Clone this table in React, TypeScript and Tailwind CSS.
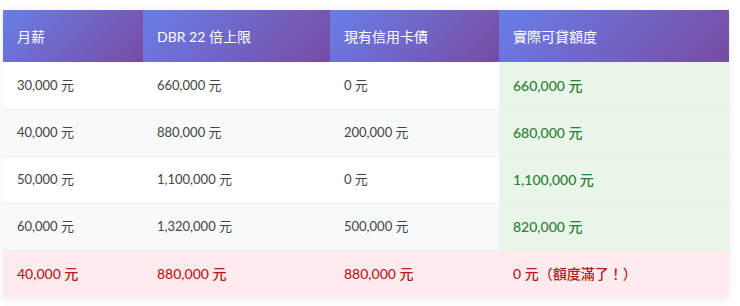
import React from 'react';

interface Row {
  salary: string;
  limit: string;
  debt: string;
  actual: string;
  warn?: boolean;
}

const rows: Row[] = [
  { salary: '30,000 元', limit: '660,000 元', debt: '0 元', actual: '660,000 元' },
  { salary: '40,000 元', limit: '880,000 元', debt: '200,000 元', actual: '680,000 元' },
  { salary: '50,000 元', limit: '1,100,000 元', debt: '0 元', actual: '1,100,000 元' },
  { salary: '60,000 元', limit: '1,320,000 元', debt: '500,000 元', actual: '820,000 元' },
  { salary: '40,000 元', limit: '880,000 元', debt: '880,000 元', actual: '0 元（額度滿了！）', warn: true },
];

const headers = ['月薪', 'DBR 22 倍上限', '現有信用卡債', '實際可貸額度'];
const widths = ['w-[140px]', 'w-[187px]', 'w-[169px]', 'w-[230px]'];

const App: React.FC = () => {
  return (
    <div className="w-[740px] h-[306px] bg-white pl-[3px] pt-[10px] font-['Lato','Noto_Sans_CJK_TC',sans-serif]">
      <table className="w-[726px] border-collapse table-fixed shadow-[0_2px_8px_rgba(0,0,0,0.08)]">
        <thead>
          <tr className="h-[52px]">
            {headers.map((h, i) => (
              <th
                key={h}
                className={`${widths[i]} px-[14px] text-left text-[14px] font-normal text-white bg-linear-135 from-[#667eea] to-[#764ba2]`}
              >
                {h}
              </th>
            ))}
          </tr>
        </thead>
        <tbody>
          {rows.map((r, idx) => {
            // warning row is red across every column
            const rowBg = r.warn ? 'bg-[#ffebee]' : idx % 2 === 1 ? 'bg-[#f8f9fa]' : 'bg-white';
            const cell = r.warn
              ? 'px-[14px] text-[14px] font-medium text-[#b71c1c]'
              : 'px-[14px] text-[13px] text-[#444]';
            return (
              <tr key={idx} className={`h-[47px] border-b border-[#eceef0] ${rowBg}`}>
                <td className={cell}>{r.salary}</td>
                <td className={cell}>{r.limit}</td>
                <td className={cell}>{r.debt}</td>
                <td
                  className={
                    r.warn
                      ? cell
                      : 'px-[14px] text-[14px] font-medium text-[#2e7d32] bg-[#e8f5e9]'
                  }
                >
                  {r.actual}
                </td>
              </tr>
            );
          })}
        </tbody>
      </table>
    </div>
  );
};

export default App;
